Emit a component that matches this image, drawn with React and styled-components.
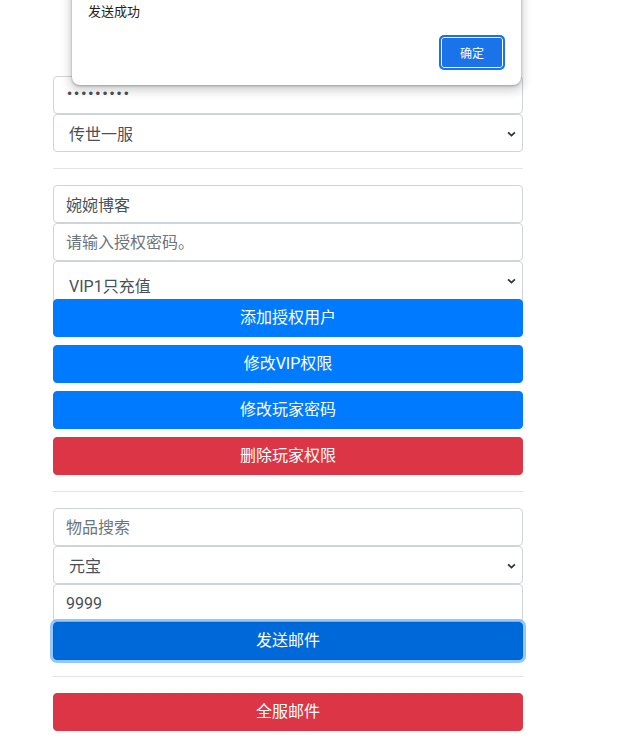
import React from 'react';
import styled, { createGlobalStyle } from 'styled-components';

const GlobalStyle = createGlobalStyle`
  html, body {
    margin: 0;
    padding: 0;
    background: #fff;
  }
  body {
    font-family: Roboto, "Noto Sans CJK SC", sans-serif;
    font-size: 16px;
    line-height: 1.5;
    color: #212529;
  }
  * {
    box-sizing: border-box;
  }
`;

const Page = styled.div`
  position: relative;
  min-height: 739px;
  padding: 76px 0 0 53px;
`;

const Form = styled.div`
  width: 470px;
  display: flex;
  flex-direction: column;
`;

const Input = styled.input`
  display: block;
  width: 100%;
  height: 38px;
  padding: 6px 12px;
  font: inherit;
  font-size: 16px;
  color: #495057;
  background: #fff;
  border: 1px solid #ced4da;
  border-radius: 4px;
  outline: none;

  &::placeholder {
    color: #6c757d;
    opacity: 1;
  }

  &[type='password'] {
    font-family: "DejaVu Sans", sans-serif;
    font-size: 12px;
    letter-spacing: 0;
    padding-bottom: 8px;
  }
`;

const Select = styled.select`
  display: block;
  width: 100%;
  height: ${props => props.tall ? '44px' : '38px'};
  margin-bottom: ${props => props.tall ? '-6px' : '0'};
  padding: ${props => props.tall ? '10px 12px 2px 15px' : '8px 12px 4px 15px'};
  font: inherit;
  font-size: 16px;
  color: #495057;
  background: #fff url("data:image/svg+xml,%3Csvg xmlns='http://www.w3.org/2000/svg' width='10' height='6' viewBox='0 0 10 6'%3E%3Cpath d='M1.2 1.2l3.8 3.6 3.8-3.6' fill='none' stroke='%23333' stroke-width='2'/%3E%3C/svg%3E") no-repeat;
  background-size: 9px 6px;
  background-position: right 6px top 16px;
  border: 1px solid #ced4da;
  border-radius: 4px;
  appearance: none;
  outline: none;
`;

const Divider = styled.hr`
  width: 100%;
  margin: 16px 0;
  border: 0;
  border-top: 1px solid rgba(0, 0, 0, 0.1);
`;

const Button = styled.button`
  position: relative;
  display: block;
  width: 100%;
  height: 38px;
  margin-top: ${props => props.gap ? '8px' : '0'};
  padding: 6px 12px;
  font: inherit;
  font-size: 16px;
  color: #fff;
  background: ${props => props.danger ? '#dc3545' : props.focused ? '#0069d9' : '#007bff'};
  border: 1px solid ${props => props.danger ? '#dc3545' : props.focused ? '#0062cc' : '#007bff'};
  border-radius: 4px;
  box-shadow: ${props => props.focused ? '0 0 0 3px rgba(38, 143, 255, 0.5)' : 'none'};
  cursor: pointer;
`;

const Dialog = styled.div`
  position: absolute;
  left: 72px;
  top: -20px;
  width: 449px;
  height: 105px;
  background: #fff;
  border-radius: 8px;
  box-shadow: 0 1px 3px rgba(0, 0, 0, 0.3), 0 4px 8px 3px rgba(0, 0, 0, 0.15);
  padding: 21px 16px 0 16px;
  display: flex;
  flex-direction: column;
`;

const DialogText = styled.div`
  font-family: "Noto Sans CJK SC", sans-serif;
  font-size: 13px;
  line-height: 20px;
  color: #202124;
`;

const DialogActions = styled.div`
  display: flex;
  justify-content: flex-end;
  margin-top: 15px;
  padding-right: 1px;
`;

const OkButton = styled.button`
  width: 64px;
  height: 33px;
  font-family: "Noto Sans CJK SC", sans-serif;
  font-size: 12px;
  color: #fff;
  background: #1a73e8;
  border: 1px solid #1a73e8;
  border-radius: 4px;
  box-shadow: inset 0 0 0 1px #fff;
  outline: 2px solid #1a73e8;
  outline-offset: -1px;
`;

export default function App() {
  return (
    <>
      <GlobalStyle />
      <Page>
        <Form>
          <Input type="password" defaultValue="123456789" />
          <Select defaultValue="1">
            <option value="1">传世一服</option>
          </Select>

          <Divider />

          <Input defaultValue="婉婉博客" />
          <Input placeholder="请输入授权密码。" />
          <Select tall defaultValue="v1">
            <option value="v1">VIP1只充值</option>
          </Select>
          <Button>添加授权用户</Button>
          <Button gap>修改VIP权限</Button>
          <Button gap>修改玩家密码</Button>
          <Button gap danger>删除玩家权限</Button>

          <Divider />

          <Input placeholder="物品搜索" />
          <Select defaultValue="yb">
            <option value="yb">元宝</option>
          </Select>
          <Input defaultValue="9999" />
          <Button focused>发送邮件</Button>

          <Divider />

          <Button danger>全服邮件</Button>
        </Form>

        <Dialog>
          <DialogText>发送成功</DialogText>
          <DialogActions>
            <OkButton>确定</OkButton>
          </DialogActions>
        </Dialog>
      </Page>
    </>
  );
}
